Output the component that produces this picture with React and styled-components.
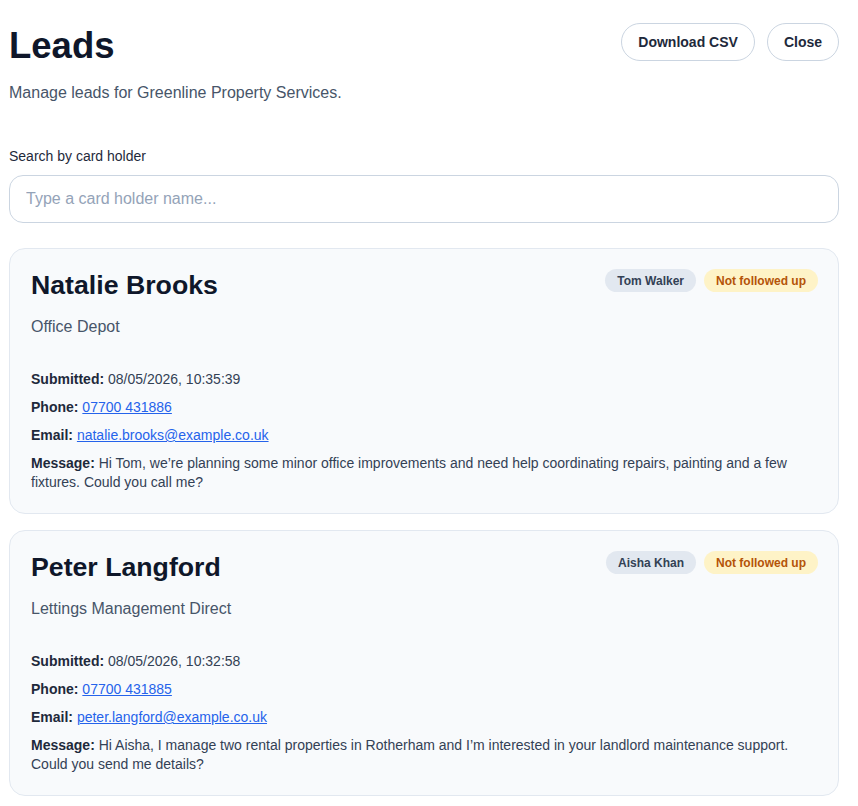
import React from 'react';
import styled, { createGlobalStyle } from 'styled-components';

const GlobalStyle = createGlobalStyle`
  * { box-sizing: border-box; }
  body {
    margin: 0;
    background: #ffffff;
    font-family: "Liberation Sans", Arial, sans-serif;
    color: #0f172a;
  }
`;

const Page = styled.div`
  width: 830px;
  margin-left: 9px;
  padding-top: 23px;
`;

const Header = styled.header`
  display: flex;
  justify-content: space-between;
  align-items: flex-start;
`;

const Title = styled.h1`
  margin: 3px 0 0;
  font-size: 36.5px;
  line-height: 40px;
  font-weight: 700;
  color: #0f172a;
`;

const Subtitle = styled.p`
  margin: 17px 0 0;
  font-size: 16px;
  line-height: 20px;
  color: #475569;
`;

const Actions = styled.div`
  display: flex;
  gap: 12px;
`;

const PillButton = styled.button`
  height: 38px;
  padding: 0 16px;
  border: 1px solid #cbd5e1;
  border-radius: 999px;
  background: #ffffff;
  font-family: inherit;
  font-size: 14px;
  font-weight: 700;
  color: #1e293b;
  cursor: pointer;
`;

const SearchBlock = styled.div`
  margin-top: 45px;
`;

const Label = styled.label`
  display: block;
  font-size: 14px;
  line-height: 17px;
  color: #1e293b;
  margin-bottom: 10px;
`;

const SearchInput = styled.input`
  width: 100%;
  height: 48px;
  padding: 0 16px;
  border: 1px solid #cbd5e1;
  border-radius: 14px;
  font-family: inherit;
  font-size: 16px;
  color: #0f172a;
  outline: none;
  &::placeholder { color: #94a3b8; }
`;

const List = styled.div`
  display: flex;
  flex-direction: column;
  gap: 16px;
  margin-top: 25px;
`;

const Card = styled.article`
  background: #f8fafc;
  border: 1px solid #e2e8f0;
  border-radius: 16px;
  padding: 20px 20px 21px 21px;
`;

const CardTop = styled.div`
  display: flex;
  justify-content: space-between;
  align-items: flex-start;
`;

const Name = styled.h2`
  margin: 0;
  font-size: 26.7px;
  line-height: 32px;
  font-weight: 700;
  color: #0f172a;
`;

const Badges = styled.div`
  display: flex;
  gap: 8px;
`;

const Badge = styled.span`
  display: inline-flex;
  align-items: center;
  height: 23px;
  padding: 0 12px;
  border-radius: 999px;
  font-size: 12px;
  font-weight: 700;
  background: ${p => (p.$tone === 'warn' ? '#fef3c7' : '#e2e8f0')};
  color: ${p => (p.$tone === 'warn' ? '#b45309' : '#334155')};
`;

const Company = styled.p`
  margin: 16px 0 0;
  font-size: 16px;
  line-height: 20px;
  color: #475569;
`;

const Details = styled.div`
  margin-top: 33px;
  display: flex;
  flex-direction: column;
  gap: 9px;
`;

const Row = styled.div`
  font-size: 14px;
  line-height: 19px;
  color: #334155;
  strong { color: #1e293b; }
  a { color: #2563eb; }
`;

const leads = [
  {
    name: 'Natalie Brooks',
    company: 'Office Depot',
    agent: 'Tom Walker',
    submitted: '08/05/2026, 10:35:39',
    phone: '07700 431886',
    email: 'natalie.brooks@example.co.uk',
    message:
      'Hi Tom, we\u2019re planning some minor office improvements and need help coordinating repairs, painting and a few fixtures. Could you call me?',
  },
  {
    name: 'Peter Langford',
    company: 'Lettings Management Direct',
    agent: 'Aisha Khan',
    submitted: '08/05/2026, 10:32:58',
    phone: '07700 431885',
    email: 'peter.langford@example.co.uk',
    message:
      'Hi Aisha, I manage two rental properties in Rotherham and I\u2019m interested in your landlord maintenance support. Could you send me details?',
  },
];

function LeadCard({ lead }) {
  return (
    <Card>
      <CardTop>
        <Name>{lead.name}</Name>
        <Badges>
          <Badge>{lead.agent}</Badge>
          <Badge $tone="warn">Not followed up</Badge>
        </Badges>
      </CardTop>
      <Company>{lead.company}</Company>
      <Details>
        <Row><strong>Submitted:</strong> {lead.submitted}</Row>
        <Row><strong>Phone:</strong> <a href={`tel:${lead.phone.replace(' ', '')}`}>{lead.phone}</a></Row>
        <Row><strong>Email:</strong> <a href={`mailto:${lead.email}`}>{lead.email}</a></Row>
        <Row><strong>Message:</strong> {lead.message}</Row>
      </Details>
    </Card>
  );
}

export default function App() {
  return (
    <>
      <GlobalStyle />
      <Page>
        <Header>
          <div>
            <Title>Leads</Title>
            <Subtitle>Manage leads for Greenline Property Services.</Subtitle>
          </div>
          <Actions>
            <PillButton>Download CSV</PillButton>
            <PillButton>Close</PillButton>
          </Actions>
        </Header>
        <SearchBlock>
          <Label>Search by card holder</Label>
          <SearchInput placeholder="Type a card holder name..." />
        </SearchBlock>
        <List>
          {leads.map(l => <LeadCard key={l.email} lead={l} />)}
        </List>
      </Page>
    </>
  );
}
